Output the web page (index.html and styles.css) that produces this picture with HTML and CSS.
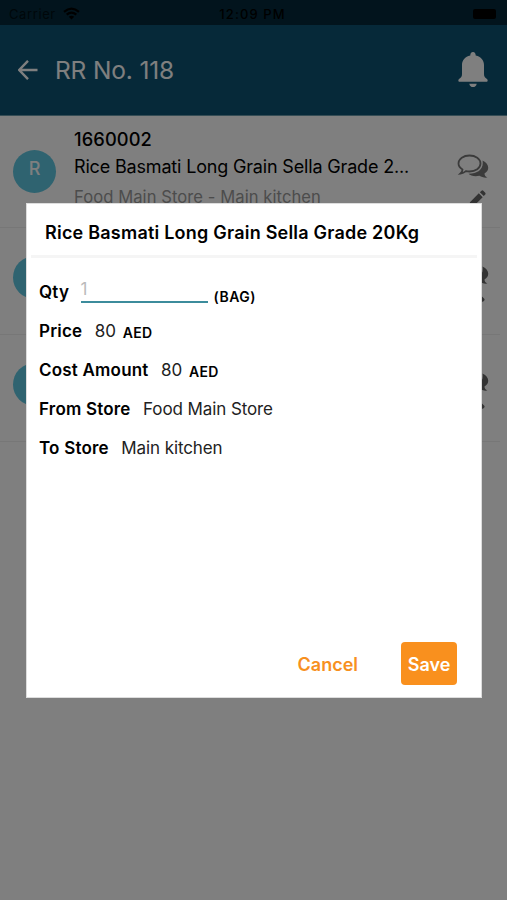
FILE: index.html
```html
<!DOCTYPE html>
<html lang="en">
<head>
<meta charset="utf-8">
<title>RR No. 118</title>
<link rel="stylesheet" href="styles.css">
</head>
<body>
<svg class="defs" aria-hidden="true">
  <symbol id="chat" viewBox="0 0 32 25">
    <path d="M25.500 6.500c7 3 7.500 10 2 13 0 2 1 3 3 4-3 .5-6-.5-8-1.700-5 1-9 0-11-2 10 0 15.500-5 14-13.300z" fill="currentColor"/>
    <path d="M12.500 1.500c6 0 11 3.500 11 8s-5 8-11 8q-2 0-3.500-.4-2.500 2-5.500 2.400 2-1.800 2-4C3 14 1.500 12 1.500 9.500c0-4.500 5-8 11-8z" fill="none" stroke="currentColor" stroke-width="1.800"/>
  </symbol>
  <symbol id="pencil" viewBox="0 0 20 20">
    <path d="M1 19l1.200-5.500L12 3.700 16.300 8 6.500 17.800zM13.200 2.500L15 .8q1-.8 2 0l2.200 2.200q.8 1 0 2l-1.700 1.800z" fill="currentColor"/>
  </symbol>
</svg>
<div class="screen">
  <div class="status">
    <div class="carrier">Carrier
      <svg width="17" height="13" viewBox="0 0 17 13"><path d="M1 4.800q7.500-6.500 15 0M3.700 7.700q4.800-4 9.600 0" fill="none" stroke="#000" stroke-width="2.200"/><path d="M5.800 9.700q2.700-2 5.400 0L8.500 12.500z"/></svg>
    </div>
    <div class="clock">12:09 PM</div>
    <div class="battery"><i></i></div>
  </div>
  <header class="bar">
    <svg class="back" width="20" height="20" viewBox="0 0 20 20"><path d="M19.500 10H1.500M10 .800L1.200 10l8.800 9.200" fill="none" stroke="#fff" stroke-width="2.400"/></svg>
    <h1>RR No. 118</h1>
    <svg class="bell" width="30" height="36" viewBox="0 0 30 36"><path d="M15 0c1.800 0 2.700 1.200 2.700 3.500C23 4.500 26 8.500 26 13v9c0 2.500 1 3.500 3 5 1.200 1.200.6 2.700-.5 2.700h-27C.4 29.700-.2 28.200 1 27c2-1.500 3-2.500 3-5v-9c0-4.500 3-8.500 8.300-9.500C12.300 1.200 13.200 0 15 0zM11.300 31.700h7.400c-.6 4.500-6.800 4.500-7.400 0z" fill="#fff"/></svg>
  </header>
  <main>
    <article class="item">
      <div class="avatar">R</div>
      <div class="info"><div class="code">1660002</div><div class="name">Rice Basmati Long Grain Sella Grade 2...</div><div class="route">Food Main Store - Main kitchen</div></div>
      <div class="tools"><svg class="chat"><use href="#chat"/></svg><svg class="pencil"><use href="#pencil"/></svg></div>
    </article>
    <article class="item"><div class="avatar"></div><div class="info"></div><div class="tools"><svg class="chat"><use href="#chat"/></svg><svg class="pencil"><use href="#pencil"/></svg></div></article>
    <article class="item"><div class="avatar"></div><div class="info"></div><div class="tools"><svg class="chat"><use href="#chat"/></svg><svg class="pencil"><use href="#pencil"/></svg></div></article>
  </main>
</div>
<div class="overlay">
  <section class="dialog">
    <h2>Rice Basmati Long Grain Sella Grade 20Kg</h2>
    <div class="fields">
      <div class="row"><b>Qty</b><span class="input">1</span><small class="bag">(BAG)</small></div>
      <div class="row"><b>Price</b><span>80</span><small>AED</small></div>
      <div class="row"><b>Cost Amount</b><span>80</span><small>AED</small></div>
      <div class="row"><b>From Store</b><span>Food Main Store</span></div>
      <div class="row"><b>To Store</b><span>Main kitchen</span></div>
    </div>
    <div class="actions"><button class="cancel">Cancel</button><button class="save">Save</button></div>
  </section>
</div>
</body>
</html>
```

FILE: styles.css
```css
* { box-sizing: border-box; }
body { margin: 0; height: 900px; overflow: hidden; font-family: Inter, sans-serif; background: #fff; color: #000; }
.defs { position: absolute; width: 0; height: 0; }
svg { display: block; flex: none; }
.screen { height: 900px; }
.status { height: 25px; background: #04293a; display: grid; grid-template-columns: 1fr auto 1fr; align-items: center; padding: 2px 11px 0 9px; font-size: 13px; }
.carrier { display: flex; gap: 7px; align-items: center; letter-spacing: .6px; color: #010e14; }
.clock { font-weight: 500; letter-spacing: 1.100px; }
.battery { justify-self: end; }
.battery i { display: block; width: 23px; height: 10px; border-radius: 2px; background: #000; }
.bar { height: 91px; background: #0c5272; border-bottom: 1px solid #6b9aab; display: flex; align-items: center; padding: 0 19px 0 18px; }
.bar h1 { margin: 0 auto 0 17px; font-size: 24.500px; letter-spacing: -.15px; font-weight: 400; color: #fff; line-height: 30px; }
.item { height: 107px; display: flex; border-bottom: 1px solid #eee; margin-right: 7px; padding-left: 13px; }
.item:first-child { height: 112px; }
.item:first-child .avatar { margin-top: 34px; }
.item:first-child .tools { padding-top: 38px; }
.avatar { width: 43px; height: 43px; margin-top: 28px; border-radius: 50%; background: #5ec6e0; color: #fff; font-size: 18px; font-weight: 500; line-height: 38px; text-align: center; flex: none; }
.info { margin-left: 18px; flex: 1; white-space: nowrap; }
.code { font-size: 18.300px; letter-spacing: .1px; font-weight: 500; line-height: 28px; margin-top: 9px; }
.name { font-size: 18px; letter-spacing: -.17px; line-height: 28px; }
.route { font-size: 16.600px; letter-spacing: .06px; line-height: 33px; color: #999; }
.tools { padding: 32px 11px 0 0; color: #777; display: flex; flex-direction: column; align-items: flex-end; gap: 11px; }
.item + .item .tools { color: #666; }
.item + .item .tools .pencil { margin-right: 4px; }
.chat { width: 32px; height: 25px; }
.pencil { width: 18px; height: 18px; margin-right: 3px; color: #666; }
.overlay { position: absolute; inset: 0; background: rgba(0,0,0,.5); padding: 203px 25px 0 26px; }
.dialog { height: 495px; background: #fff; border: 1px solid #ddd; display: flex; flex-direction: column; }
.dialog h2 { margin: 0 4px; padding: 0 14px; height: 54px; border-bottom: 3px solid #f5f5f5; font-size: 18px; font-weight: 600; letter-spacing: .22px; line-height: 58px; white-space: nowrap; }
.fields { padding: 14px 12px 0; }
.row { height: 39px; display: flex; align-items: center; font-size: 17px; padding-top: 1px; }
.row b { font-weight: 600; letter-spacing: .2px; margin-right: 12.500px; }
.row span { color: #222; letter-spacing: -.1px; }
.row small { font-size: 14px; letter-spacing: .2px; font-weight: 600; margin: 3px 0 0 7px; }
.row .input { width: 127px; height: 26px; line-height: 24px; color: #bbb; border-bottom: 2px solid #3c8c9c; margin: 0 0 4px -1px; }
.row .bag { margin: 9px 0 0 6px; letter-spacing: .5px; }
.actions { margin-top: auto; padding: 0 24px 12px 0; display: flex; justify-content: flex-end; gap: 43px; }
button { font: 600 18px Inter, sans-serif; border: 0; padding: 1px 0 0; background: none; height: 43px; }
.cancel { color: #f7901e; }
.save { width: 56px; background: #f9901e; color: #fff; border-radius: 4px; }
```
